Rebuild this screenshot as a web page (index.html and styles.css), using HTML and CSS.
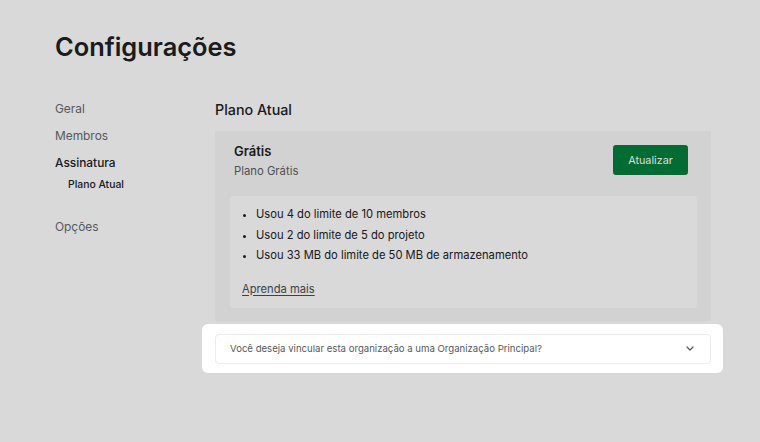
FILE: index.html
```html
<!DOCTYPE html>
<html lang="pt">
<head>
<meta charset="utf-8">
<title>Configurações</title>
<link rel="stylesheet" href="styles.css">
</head>
<body>
<div class="page">
  <h1 class="title">Configurações</h1>
  <div class="layout">
    <nav class="sidebar">
      <a class="nav-item">Geral</a>
      <a class="nav-item">Membros</a>
      <a class="nav-item active">Assinatura</a>
      <a class="nav-sub">Plano Atual</a>
      <a class="nav-item options">Opções</a>
    </nav>
    <main class="main">
      <h2 class="section-title">Plano Atual</h2>
      <section class="card">
        <div class="card-header">
          <div class="plan">
            <div class="plan-name">Grátis</div>
            <div class="plan-desc">Plano Grátis</div>
          </div>
          <button class="btn-primary">Atualizar</button>
        </div>
        <div class="usage">
          <ul class="usage-list">
            <li>Usou 4 do limite de 10 membros</li>
            <li>Usou 2 do limite de 5 do projeto</li>
            <li>Usou 33 MB do limite de 50 MB de armazenamento</li>
          </ul>
          <a class="learn-more">Aprenda mais</a>
        </div>
      </section>
      <div class="accordion-wrap">
        <div class="accordion">
          <span class="accordion-text">Você deseja vincular esta organização a uma Organização Principal?</span>
          <svg class="chevron" width="8" height="5" viewBox="0 0 8 5"><path d="M1 1 L4 4 L7 1" fill="none" stroke="#555" stroke-width="1.2" stroke-linecap="round" stroke-linejoin="round"/></svg>
        </div>
        <div class="spotlight"></div>
      </div>
    </main>
  </div>
</div>
</body>
</html>
```

FILE: styles.css
```css
* { box-sizing: border-box; }
html, body { margin: 0; padding: 0; background: #ffffff; }
body {
  font-family: Inter, "Noto Sans", sans-serif;
  color: #1e2125;
  width: 760px;
  height: 442px;
  overflow: hidden;
}
.page {
  padding: 31px 49px 0 55px;
}
.title {
  margin: 0;
  font-size: 25.4px;
  line-height: 32px;
  font-weight: 600;
  color: #1e2125;
}
.layout {
  display: flex;
  margin-top: 36px;
}
.sidebar {
  width: 160px;
  flex: none;
  display: flex;
  flex-direction: column;
}
.nav-item {
  font-size: 11.9px;
  line-height: 20px;
  color: #666a6e;
  margin-bottom: 7px;
}
.nav-item.active {
  color: #1e2125;
  font-weight: 500;
  margin-bottom: 4px;
}
.nav-item.options {
  padding-top: 1px;
}
.nav-sub {
  font-size: 10.4px;
  line-height: 16px;
  font-weight: 500;
  color: #1e2125;
  padding-left: 13px;
  margin-bottom: 22.5px;
}
.main {
  width: 496px;
  flex: none;
}
.section-title {
  margin: 0 0 12px;
  padding-top: 1px;
  font-size: 14.3px;
  line-height: 19px;
  font-weight: 500;
  color: #1e2125;
}
.card {
  background: #f7f7f7;
  border-radius: 2px;
  padding: 14px 14px 13px 15px;
}
.card-header {
  display: flex;
  justify-content: space-between;
  align-items: flex-start;
  padding: 0 9px 0 4px;
  margin-bottom: 16px;
}
.plan {
  margin-top: -2px;
}
.plan-name {
  font-size: 13px;
  line-height: 16px;
  font-weight: 600;
  color: #1e2125;
}
.plan-desc {
  margin-top: 3px;
  font-size: 11.3px;
  line-height: 18px;
  color: #5b5f63;
}
.btn-primary {
  width: 75px;
  height: 30px;
  border: none;
  border-radius: 3px;
  background: #047f3d;
  color: #ffffff;
  font-family: inherit;
  font-size: 10.8px;
  padding: 0;
}
.usage {
  background: #ffffff;
  border-radius: 4px;
  padding: 8px 12px 9px;
}
.usage-list {
  margin: 0 0 13px;
  padding-left: 14px;
  font-size: 11.2px;
  line-height: 20.5px;
  color: #1e2125;
}
.usage-list li::marker { font-size: 10px; }
.learn-more {
  display: block;
  font-size: 11.2px;
  line-height: 20px;
  color: #4a4e52;
  text-decoration: underline;
  text-underline-offset: 2px;
}
.accordion-wrap {
  position: relative;
  margin-top: 13px;
}
.accordion {
  height: 30px;
  border: 1px solid #ececec;
  border-radius: 4px;
  background: #ffffff;
  display: flex;
  align-items: center;
  justify-content: space-between;
  padding: 0 16px 0 14px;
}
.accordion-text {
  font-size: 9.6px;
  color: #55595d;
}
.chevron { display: block; }
.spotlight {
  position: absolute;
  top: -10px;
  left: -13px;
  right: -12px;
  bottom: -9px;
  border-radius: 6px;
  box-shadow: 0 0 0 3000px rgba(0, 0, 0, 0.15);
  pointer-events: none;
}
```
